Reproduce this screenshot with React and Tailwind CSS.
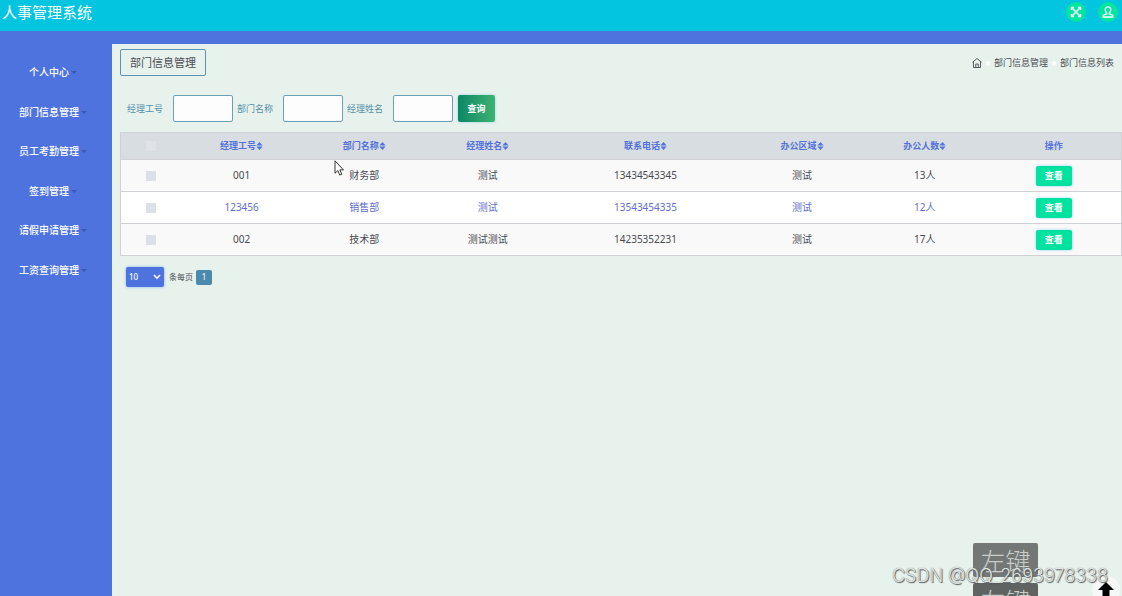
import React from "react";

const MENU = ["个人中心", "部门信息管理", "员工考勤管理", "签到管理", "请假申请管理", "工资查询管理"];

const FILTERS = [
  { id: "manager-no", label: "经理工号" },
  { id: "dept-name", label: "部门名称" },
  { id: "manager-name", label: "经理姓名" },
];

const HEADERS = ["经理工号", "部门名称", "经理姓名", "联系电话", "办公区域", "办公人数"];

const ROWS = [
  ["001", "财务部", "测试", "13434543345", "测试", "13人"],
  ["123456", "销售部", "测试", "13543454335", "测试", "12人"],
  ["002", "技术部", "测试测试", "14235352231", "测试", "17人"],
];

function SortIcon() {
  return (
    <svg viewBox="0 0 14 18" className="h-2 w-[7px] shrink-0" fill="currentColor" aria-hidden="true">
      <path d="M7 0 14 8H0zM7 18 0 10h14z" />
    </svg>
  );
}

function ExpandIcon() {
  return (
    <svg viewBox="0 0 20 20" className="size-3" fill="none" stroke="currentColor" strokeWidth="2.4" aria-hidden="true">
      <path d="M3 3 17 17M17 3 3 17" />
      <path d="M2 6.500v-4.500h4.500zM13.500 2h4.500v4.500zM18 13.500v4.500h-4.500zM6.500 18h-4.500v-4.500z" fill="currentColor" strokeWidth="1.500" />
    </svg>
  );
}

function UserIcon() {
  return (
    <svg viewBox="0 0 20 20" className="size-3" fill="none" stroke="currentColor" strokeWidth="2.2" aria-hidden="true">
      <path d="M10 1.500c-3 0-4.600 2-4.600 4.800 0 2.200 1 4.300 2.500 5.200v1.500L2 15.300v3h16v-3L12.100 13v-1.500c1.500-.9 2.500-3 2.500-5.200 0-2.800-1.600-4.800-4.600-4.800z" />
    </svg>
  );
}

function HomeIcon() {
  return (
    <svg viewBox="0 0 20 20" className="size-2.5" fill="none" stroke="currentColor" strokeWidth="1.8" aria-hidden="true">
      <path d="M1 8.500 10 1l9 7.500M3 7.500V19h14V7.500M7.500 19v-7h5v7" />
    </svg>
  );
}

function Star() {
  return (
    <svg viewBox="0 0 20 20" className="size-1.5 text-white" fill="currentColor" aria-hidden="true">
      <path d="m10 0 3 7 7 .6-5.300 4.800L16.500 20 10 15.800 3.500 20l1.800-7.600L0 7.600 7 7z" />
    </svg>
  );
}

function Cursor() {
  return (
    <svg viewBox="0 0 10 16" className="pointer-events-none absolute left-[334px] top-40 h-4 w-2.5" aria-hidden="true">
      <path d="M1 .8v12.400l2.800-2.600 2 4.500 2-.9-2-4.300h3.700z" fill="#fff" stroke="#333" strokeWidth="1" />
    </svg>
  );
}

export default function App() {
  return (
    <div className="relative flex h-screen flex-col overflow-hidden bg-[#4e73df] font-['Noto_Sans','Noto_Sans_CJK_SC',sans-serif] text-[10px] text-[#4a4b52]">
      <header className="flex h-[31px] shrink-0 items-center justify-between bg-[#04c5df] pl-0.5 text-white">
        <h1 className="pb-2 text-[15px] leading-5">人事管理系统</h1>
        <div className="flex gap-3 pb-2 pr-1">
          <button type="button" aria-label="全屏" className="flex size-5 items-center justify-center rounded-full bg-[#00e5a0]">
            <ExpandIcon />
          </button>
          <button type="button" aria-label="用户" className="flex size-5 items-center justify-center rounded-full bg-[#00e5a0]">
            <UserIcon />
          </button>
        </div>
      </header>

      <div className="flex min-h-0 flex-1 pt-[13px]">
        <nav className="w-28 shrink-0 pt-[9px]">
          <ul className="grid h-[237px] auto-rows-fr">
            {MENU.map((item) => (
              <li key={item} className="flex items-center justify-center pr-1.5">
                <a href="#" className="flex items-center gap-0.5 font-medium text-white">
                  {item}
                  <span className="border-x-3 border-t-3 border-x-transparent border-t-[#3a58b5]" />
                </a>
              </li>
            ))}
          </ul>
        </nav>

        <main className="min-w-0 flex-1 bg-[#e7f2ed] pl-2">
          <div className="flex items-start justify-between pr-2 pt-[5px]">
            <h2 className="flex h-[27px] items-center rounded-xs border border-[#5b94b3] px-[9px] pt-px text-[11px]">部门信息管理</h2>
            <ol className="flex h-[27px] items-center gap-[3px] text-[9px]">
              <li>
                <a href="#" aria-label="首页">
                  <HomeIcon />
                </a>
              </li>
              <li className="flex items-center gap-[3px]">
                <Star />
                <a href="#">部门信息管理</a>
              </li>
              <li className="flex items-center gap-[3px]">
                <Star />
                <span>部门信息列表</span>
              </li>
            </ol>
          </div>

          <form className="flex items-center gap-1 pl-[7px] pt-[19px] text-[9px] text-[#5690a8]" onSubmit={(e) => e.preventDefault()}>
            {FILTERS.map((f) => (
              <div key={f.id} className="flex items-center gap-2.5">
                <label htmlFor={f.id}>{f.label}</label>
                <input id={f.id} type="text" className="h-[27px] w-[60px] rounded-xs border border-[#6a9fba] bg-[#fdfdfd] px-1 outline-none" />
              </div>
            ))}
            <button type="submit" className="ml-px h-[27px] w-[37px] rounded-xs bg-linear-to-r from-[#098765] to-[#3cb371] font-bold text-white shadow-[0_0_3px_#9cd3e8]">
              查询
            </button>
          </form>

          <table className="mt-[10px] w-full table-fixed border-collapse border border-[#d0d1d4] text-center">
            <colgroup>
              <col className="w-[6%]" />
              <col className="w-[12.2%]" />
              <col className="w-[12.3%]" />
              <col className="w-[12.4%]" />
              <col className="w-[19.1%]" />
              <col className="w-[12.2%]" />
              <col className="w-[12.3%]" />
              <col />
            </colgroup>
            <thead className="bg-[#d8dde2] text-[9px] text-[#5473da]">
              <tr className="h-[27px]">
                <th className="align-middle">
                  <input type="checkbox" aria-label="全选" className="mx-auto block size-2.5 appearance-none rounded-[1px] bg-[#dfe3e7]" />
                </th>
                {HEADERS.map((h) => (
                  <th key={h}>
                    <span className="flex items-center justify-center">
                      {h}
                      <SortIcon />
                    </span>
                  </th>
                ))}
                <th>操作</th>
              </tr>
            </thead>
            <tbody>
              {ROWS.map((row) => (
                <tr key={row[0]} className="h-8 border-t border-[#d0d1d4] odd:bg-[#f9f9fa] even:bg-white even:text-[#626fc9]">
                  <td>
                    <input type="checkbox" aria-label={row[0]} className="mx-auto block size-2.5 appearance-none rounded-[1px] bg-[#dde1e7]" />
                  </td>
                  {row.map((cell, i) => (
                    <td key={i}>{cell}</td>
                  ))}
                  <td>
                    <button type="button" className="mx-auto block h-5 w-9 rounded-xs bg-[#00e2a0] text-[9px] font-bold text-white shadow-[0_0_3px_#9fd0f0]">
                      查看
                    </button>
                  </td>
                </tr>
              ))}
            </tbody>
          </table>

          <div className="flex items-center gap-[3px] pl-1.5 pt-[11px] text-[8px]">
            <div className="relative mr-0.5">
              <select id="page-size" defaultValue="10" className="block h-5 w-[38px] appearance-none rounded-xs bg-[#4e73df] pl-[3px] text-[8px] font-medium text-white shadow-[0_0_3px_#7fb2f0]">
                <option>10</option>
                <option>20</option>
                <option>50</option>
              </select>
              <svg viewBox="0 0 8 6" className="pointer-events-none absolute right-[3px] top-[7px] h-1.5 w-2" fill="none" stroke="#fff" strokeWidth="1.6" aria-hidden="true">
                <path d="M1 1 4 4.200 7 1" />
              </svg>
            </div>
            <label htmlFor="page-size">条每页</label>
            <button type="button" className="h-[15px] w-4 rounded-xs bg-[#4b8aad] text-white">
              1
            </button>
          </div>
        </main>
      </div>

      <Cursor />

      <div className="pointer-events-none absolute -bottom-5 right-[84px] flex w-[65px] flex-col gap-1.5 text-center font-['Noto_Sans_CJK_SC',sans-serif] text-[25px] font-light text-[#c9cecb]">
        <span className="h-[34px] rounded-xs bg-[#737876] leading-[34px]">左键</span>
        <span className="h-[33px] rounded-xs bg-[#5f6462] leading-[34px]">左键</span>
      </div>
      <button type="button" aria-label="返回顶部" className="absolute -bottom-2 right-0.5 flex size-7 justify-center rounded-full bg-[#f6f8f8] pt-1.5">
        <svg viewBox="0 0 16 16" className="size-4" fill="#000" aria-hidden="true">
          <path d="M8 0 16 8h-4.500v8h-7V8H0z" />
        </svg>
      </button>
      <p className="pointer-events-none absolute bottom-2 right-3.5 font-['Inter',sans-serif] text-[18px] font-light leading-6 text-[#dfe4e2] [text-shadow:1px_1px_1px_#555,0_0_1px_#777]">
        CSDN @QQ_2693978338
      </p>
    </div>
  );
}
